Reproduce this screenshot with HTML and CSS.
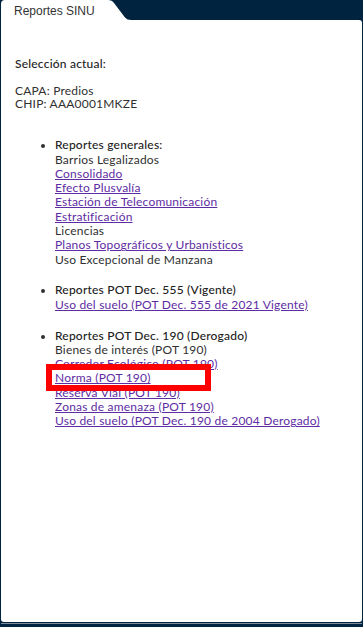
FILE: index.html
```html
<!DOCTYPE html>
<html lang="es">
<head>
<meta charset="utf-8">
<title>Reportes SINU</title>
<link rel="stylesheet" href="styles.css">
</head>
<body>
<div class="frame">
  <div class="tabbar">
    <div class="tab"><span class="tab-label">Reportes SINU</span></div>
  </div>
  <div class="panel">
    <div class="sel-title">Selección actual:</div>
    <div class="sel-info">
      <div>CAPA: Predios</div>
      <div>CHIP: AAA0001MKZE</div>
    </div>
    <ul class="reports">
      <li>
        <div class="group-title">Reportes generales:</div>
        <div>Barrios Legalizados</div>
        <a href="#">Consolidado</a>
        <a href="#">Efecto Plusvalía</a>
        <a href="#">Estación de Telecomunicación</a>
        <a href="#">Estratificación</a>
        <div>Licencias</div>
        <a href="#">Planos Topográficos y Urbanísticos</a>
        <div>Uso Excepcional de Manzana</div>
      </li>
      <li>
        <div class="group-title">Reportes POT Dec. 555 (Vigente)</div>
        <a href="#">Uso del suelo (POT Dec. 555 de 2021 Vigente)</a>
      </li>
      <li>
        <div class="group-title">Reportes POT Dec. 190 (Derogado)</div>
        <div>Bienes de interés (POT 190)</div>
        <a href="#">Corredor Ecológico (POT 190)</a>
        <a href="#">Norma (POT 190)</a>
        <a href="#">Reserva Vial (POT 190)</a>
        <a href="#">Zonas de amenaza (POT 190)</a>
        <a href="#">Uso del suelo (POT Dec. 190 de 2004 Derogado)</a>
      </li>
    </ul>
  </div>
  <div class="highlight"></div>
</div>
</body>
</html>
```

FILE: styles.css
```css
html, body {
  margin: 0;
  padding: 0;
}

body {
  width: 363px;
  height: 627px;
  overflow: hidden;
  background: #00243f;
}

.frame {
  position: relative;
  display: flex;
  flex-direction: column;
  height: 627px;
}

.tabbar {
  display: flex;
  height: 20px;
}

.tab {
  width: 131px;
  height: 20px;
  background: #ffffff;
  clip-path: path('M1,20 L1,4 Q1,0 5,0 L108,0 Q112,0 114,3 L125,17.5 Q127,20 131,20 Z');
  display: flex;
  align-items: center;
}

.tab-label {
  padding-left: 14px;
  padding-top: 2px;
  font-family: "Liberation Sans", Arial, sans-serif;
  font-size: 12px;
  color: #333333;
}

.panel {
  position: relative;
  margin-left: 1px;
  width: 361px;
  height: 602px;
  box-sizing: border-box;
  background: #ffffff;
  border-radius: 0 3px 3px 3px;
  padding: 37px 0 0 14px;
  font-family: Lato, "Noto Sans", sans-serif;
  font-size: 12px;
  letter-spacing: 0.2px;
  color: #303030;
}

.panel::after {
  content: "";
  position: absolute;
  left: 0;
  right: 0;
  bottom: -2px;
  height: 1px;
  background: #7d8c99;
}

.sel-title {
  line-height: 14.3px;
  font-weight: 500;
  color: #222222;
}

.sel-info {
  margin-top: 13.8px;
  line-height: 12.6px;
}

.reports {
  margin: 28px 0 0 0;
  padding-left: 40px;
  list-style: disc;
  line-height: 14.3px;
}

.reports li {
  margin-bottom: 16.5px;
}

.reports li::marker {
  font-size: 11px;
}

.group-title {
  font-weight: 500;
  color: #222222;
}

.reports a {
  display: block;
  width: max-content;
  color: #5e2ca3;
  text-decoration: underline;
  text-underline-offset: 1px;
}

.highlight {
  position: absolute;
  left: 46px;
  top: 364px;
  width: 165px;
  height: 27px;
  box-sizing: border-box;
  border: 6px solid #ff0000;
}
```
